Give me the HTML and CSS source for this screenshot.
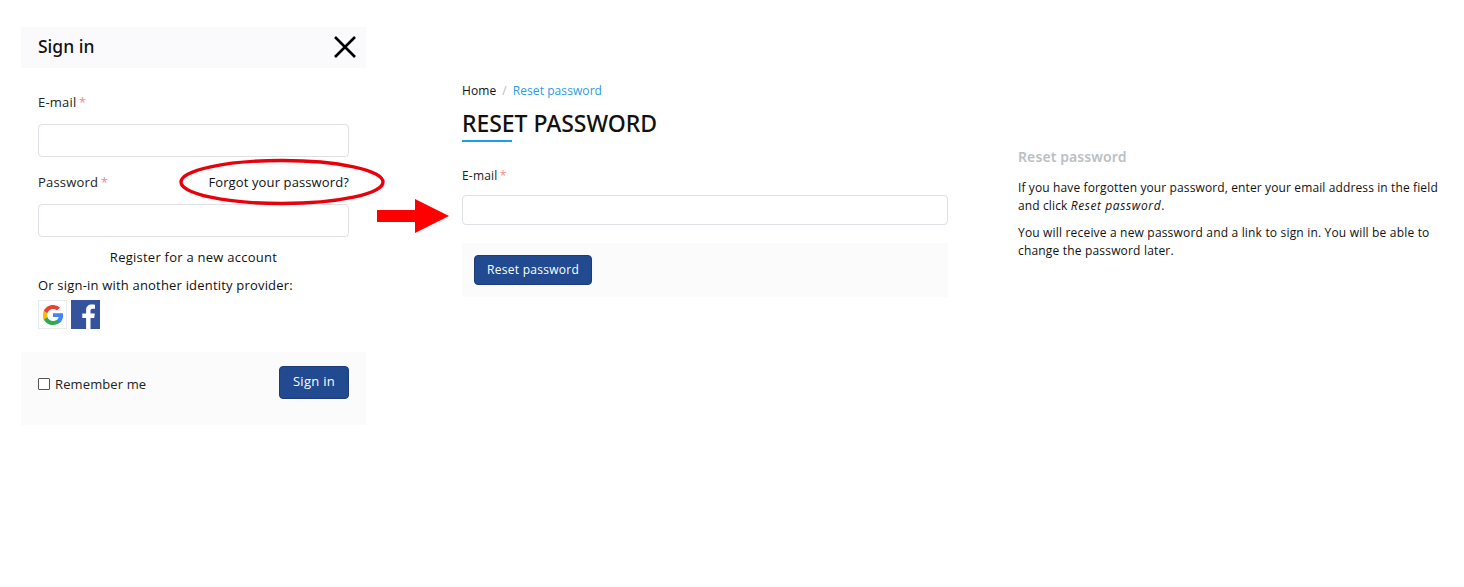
FILE: index.html
```html
<!DOCTYPE html>
<html lang="en">
<head>
<meta charset="utf-8">
<title>Reset password</title>
<link rel="stylesheet" href="styles.css">
</head>
<body>
<div class="page">
  <section class="modal">
    <header class="modal-head">
      <h2 class="modal-title">Sign in</h2>
      <svg class="close" width="24" height="24" viewBox="0 0 24 24"><path d="M2 2 22 22M22 2 2 22" stroke="#000" stroke-width="2.6" fill="none"/></svg>
    </header>
    <div class="modal-body">
      <div class="label-row first"><span class="label">E-mail <span class="req">*</span></span></div>
      <div class="input"></div>
      <div class="label-row"><span class="label">Password <span class="req">*</span></span><a class="link">Forgot your password?</a></div>
      <div class="input"></div>
      <a class="register">Register for a new account</a>
      <p class="providers">Or sign-in with another identity provider:</p>
      <div class="idp">
        <span class="idp-btn google">
          <svg width="22" height="22" viewBox="0 0 48 48"><path fill="#4285F4" d="M46 24.5c0-1.6-.1-3.100-.4-4.500H24v8.600h12.400c-.5 2.800-2.100 5.200-4.500 6.800v5.600h7.300C43.500 37 46 31.300 46 24.500z"/><path fill="#34A853" d="M24 46c6.100 0 11.200-2 14.900-5.500l-7.300-5.600c-2 1.400-4.600 2.200-7.600 2.200-5.900 0-10.800-4-12.600-9.300H3.900v5.800C7.500 40.900 15.200 46 24 46z"/><path fill="#FBBC05" d="M11.400 28.800c-.5-1.400-.7-2.800-.7-4.300s.3-3 .7-4.300v-5.800H3.900C2.700 17 2 20.400 2 24.500s.7 7 1.900 10.100l7.500-5.800z"/><path fill="#EA4335" d="M24 10.700c3.300 0 6.300 1.100 8.600 3.400l6.500-6.500C35.200 4 30.100 2 24 2 15.200 2 7.500 7.100 3.900 14.400l7.500 5.800c1.800-5.400 6.700-9.500 12.600-9.500z"/></svg>
        </span>
        <span class="idp-btn facebook">
          <svg width="29" height="29" viewBox="0 0 29 29"><path fill="#fff" d="M19.500 29V18h3.700l.6-4.400h-4.300v-2.800c0-1.300.4-2.100 2.200-2.100h2.300V4.800c-.4-.1-1.800-.2-3.300-.2-3.300 0-5.600 2-5.600 5.700v3.300H11.300V18h3.800v11z"/></svg>
        </span>
      </div>
    </div>
    <footer class="modal-foot">
      <label class="remember"><span class="checkbox"></span>Remember me</label>
      <button class="btn btn-signin">Sign in</button>
    </footer>
  </section>

  <main class="content">
    <nav class="crumbs"><a class="crumb-home">Home</a><span class="sep">/</span><a class="crumb-now">Reset password</a></nav>
    <h1 class="page-title">RESET PASSWORD</h1>
    <div class="label-row reset-label"><span class="label">E-mail <span class="req">*</span></span></div>
    <div class="input reset-input"></div>
    <div class="actions"><button class="btn">Reset password</button></div>
  </main>

  <aside class="help">
    <h3 class="help-title">Reset password</h3>
    <p class="help-first">If you have forgotten your password, enter your email address in the field and click <em>Reset password</em>.</p>
    <p>You will receive a new password and a link to sign in. You will be able to change the password later.</p>
  </aside>
</div>

<svg class="mark-ellipse" width="206" height="48" viewBox="0 0 206 48"><ellipse cx="103" cy="24" rx="101" ry="21.500" fill="none" stroke="#e8000a" stroke-width="3.400"/></svg>
<svg class="mark-arrow" width="72" height="34" viewBox="0 0 72 34"><path d="M0 11H38V0L72 17 38 34V23H0z" fill="#f00"/></svg>
</body>
</html>
```
FILE: styles.css
```css
* { box-sizing: border-box; }
html, body { margin: 0; height: 100%; background: #fff; }
body {
  font-family: "Open Sans", "Noto Sans", sans-serif;
  font-size: 13px;
  letter-spacing: .19px;
  color: #111;
  position: relative;
  overflow: hidden;
}
p { margin: 0; }
.page { display: flex; align-items: flex-start; padding: 27px 0 0 21px; }

.modal { width: 345px; flex: none; }
.modal-head {
  height: 41px;
  background: #fafafc;
  display: flex;
  align-items: center;
  justify-content: space-between;
  padding: 0 9px 0 17px;
}
.close { margin-top: -2px; }
.modal-title {
  margin: -3px 0 0;
  font: 500 17.500px/24px "Noto Sans", sans-serif;
  letter-spacing: 0;
  color: #111;
}
.modal-body { padding: 24px 17px 0; }
.label-row {
  display: flex;
  justify-content: space-between;
  align-items: center;
  height: 20px;
  margin: 0 0 12px;
}
.label { color: #222; }
.req { color: #f08a8a; margin-left: -1px; }
.link { color: #111; letter-spacing: .12px; }
.input {
  height: 33px;
  border: 1px solid #dfdfe6;
  border-radius: 4px;
  background: #fff;
  margin-bottom: 15px;
}
.register { display: block; text-align: center; line-height: 20px; margin-top: -5px; letter-spacing: .25px; }
.providers { margin-top: 8px; line-height: 20px; }
.idp { display: flex; gap: 4px; margin-top: 5px; }
.idp-btn {
  width: 29px;
  height: 29px;
  display: flex;
  align-items: center;
  justify-content: center;
}
.google { border: 1px solid #e8ecef; }
.facebook { background: #34539c; }
.modal-foot {
  margin-top: 23px;
  height: 73px;
  background: #fbfbfb;
  display: flex;
  align-items: flex-start;
  justify-content: space-between;
  padding: 14px 17px 0;
}
.remember { display: flex; align-items: center; gap: 5px; margin-top: 8px; height: 20px; color: #222; letter-spacing: .12px; }
.checkbox { width: 12px; height: 12px; border: 1px solid #555; border-radius: 1px; background: #fff; }
.btn {
  height: 33px;
  padding: 0 13px;
  font: inherit;
  letter-spacing: .28px;
  color: #fff;
  background: #224a90;
  border: 1px solid #1b3c78;
  border-radius: 4px;
}
.btn-signin { padding-bottom: 3px; }

.content { width: 486px; flex: none; margin: 54px 0 0 96px; }
.crumbs { display: flex; align-items: center; height: 18px; font-size: 12px; letter-spacing: .08px; }
.crumb-home { color: #111; }
.sep { color: #bbb; margin: 0 6px 0 6px; }
.crumb-now { color: #2a9be8; }
.page-title {
  display: block;
  margin: 9px 0 0;
  font: 500 23px/30px "Noto Sans", sans-serif;
  letter-spacing: -.05px;
  color: #111;
  position: relative;
  padding-bottom: 4px;
}
.page-title::after {
  content: "";
  position: absolute;
  left: 0;
  bottom: 0;
  width: 50px;
  height: 2px;
  background: #18a0ee;
}
.reset-label { margin: 23px 0 10px; font-size: 12px; }
.reset-input { height: 30px; margin-bottom: 18px; }
.actions { height: 54px; background: #fbfbfb; padding: 12px 12px; }
.actions .btn { height: 30px; padding: 0 12px 1px; font-size: 12px; }

.help { width: 425px; flex: none; margin: 120px 0 0 70px; font-size: 12px; line-height: 18px; letter-spacing: .18px; }
.help-title {
  margin: 0 0 12px;
  font: 600 14px/20px "Noto Sans", sans-serif;
  letter-spacing: .1px;
  color: #bbc0c4;
}
.help p { margin-bottom: 9px; }
.help .help-first { letter-spacing: .12px; }
.help-first em { letter-spacing: .6px; }

.mark-ellipse { position: absolute; left: 179px; top: 158px; }
.mark-arrow { position: absolute; left: 377px; top: 199px; }
```
